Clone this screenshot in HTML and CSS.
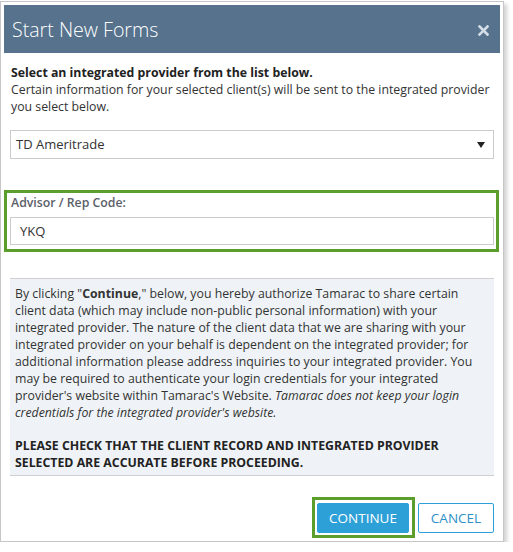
FILE: index.html
```html
<!DOCTYPE html>
<html>
<head>
<meta charset="utf-8">
<link rel="stylesheet" href="styles.css">
</head>
<body>
<div class="dialog">
  <div class="header">
    <h1 class="title">Start New Forms</h1>
    <svg class="close" width="11" height="11" viewBox="0 0 11 11"><path d="M1.5 1.5 L9.5 9.5 M9.5 1.5 L1.5 9.5" stroke="#d4dde6" stroke-width="2.6" stroke-linecap="square"/></svg>
  </div>
  <div class="body">
    <p class="intro"><strong>Select an integrated provider from the list below.</strong><br>Certain information for your selected client(s) will be sent to the integrated provider you select below.</p>
    <div class="select">
      <span>TD Ameritrade</span>
      <svg class="caret" width="8" height="6" viewBox="0 0 8 6"><path d="M0 0 H8 L4 6 Z" fill="#222"/></svg>
    </div>
    <div class="highlight field">
      <div class="label">Advisor / Rep Code:</div>
      <div class="input">YKQ</div>
    </div>
    <div class="notice">
      <p>By clicking "<strong>Continue</strong>," below, you hereby authorize Tamarac to share certain client data (which may include non-public personal information) with your integrated provider. The nature of the client data that we are sharing with your integrated provider on your behalf is dependent on the integrated provider; for additional information please address inquiries to your integrated provider. You may be required to authenticate your login credentials for your integrated provider's website within Tamarac's Website. <em>Tamarac does not keep your login credentials for the integrated provider's website.</em></p>
      <p class="warn">PLEASE CHECK THAT THE CLIENT RECORD AND INTEGRATED PROVIDER SELECTED ARE ACCURATE BEFORE PROCEEDING.</p>
    </div>
    <div class="footer">
      <div class="highlight btnwrap"><button class="btn primary">CONTINUE</button></div>
      <button class="btn secondary">CANCEL</button>
    </div>
  </div>
</div>
</body>
</html>
```
FILE: styles.css
```css
html, body {
  margin: 0;
  padding: 0;
  background: #fff;
}
body {
  font-family: "Open Sans", "Noto Sans", sans-serif;
  font-size: 12.3px;
  line-height: 17px;
  color: #333;
}
.dialog {
  margin-top: 1px;
  width: 496px;
  padding: 3px;
  border: 1px solid #c6c6c6;
  background: #fff;
  box-shadow: 3px 3px 4px rgba(0,0,0,0.18);
}
.header {
  height: 48px;
  background: #56728d;
  display: flex;
  align-items: center;
  justify-content: space-between;
  padding: 0 11px 0 8px;
}
.title {
  margin: 0;
  font-weight: 300;
  font-size: 19.6px;
  color: #fff;
}
.close {
  display: block;
  margin-top: 2px;
}
.body {
  padding: 11px 6px 0 6px;
}
.intro {
  margin: 0 0 0 1px;
}
.intro strong {
  font-weight: 700;
  color: #222;
}
.select {
  margin-top: 15px;
  height: 27px;
  border: 1px solid #ccc;
  display: flex;
  align-items: center;
  justify-content: space-between;
  padding: 0 8px 0 5px;
  font-size: 13px;
}
.caret {
  display: block;
}
.highlight {
  border: 3px solid #5c9e2b;
}
.field {
  margin: 31px -5px 0 -6px;
  padding: 1px 2px 4px 3px;
}
.label {
  font-weight: 600;
  color: #5a6068;
  padding-left: 1px;
  margin-bottom: 6px;
}
.input {
  height: 26px;
  border: 1px solid #ccc;
  display: flex;
  align-items: center;
  padding-left: 9px;
  font-size: 13px;
}
.notice {
  margin-top: 26px;
  background: #eff3f7;
  border-top: 1px solid #cfcfcf;
  border-bottom: 1px solid #cfcfcf;
  padding: 6px 14px 4px 5px;
}
.notice p {
  margin: 0;
}
.notice .warn {
  margin-top: 16px;
  font-weight: 700;
  color: #222;
}
.footer {
  margin-top: 21px;
  display: flex;
  justify-content: flex-end;
  align-items: center;
  gap: 3px;
}
.btnwrap {
  padding: 3px 3px 2px 2px;
}
.btn {
  display: block;
  height: 30px;
  font-family: "Open Sans", "Noto Sans", sans-serif;
  font-size: 13.5px;
  padding: 0;
  cursor: pointer;
}
.primary {
  width: 92px;
  background: #2ea0d8;
  border: 1px solid #2ea0d8;
  border-radius: 2px;
  color: #fff;
}
.secondary {
  width: 76px;
  background: #fff;
  border: 1px solid #2ea0d8;
  border-radius: 2px;
  color: #2e8fc8;
}
```
